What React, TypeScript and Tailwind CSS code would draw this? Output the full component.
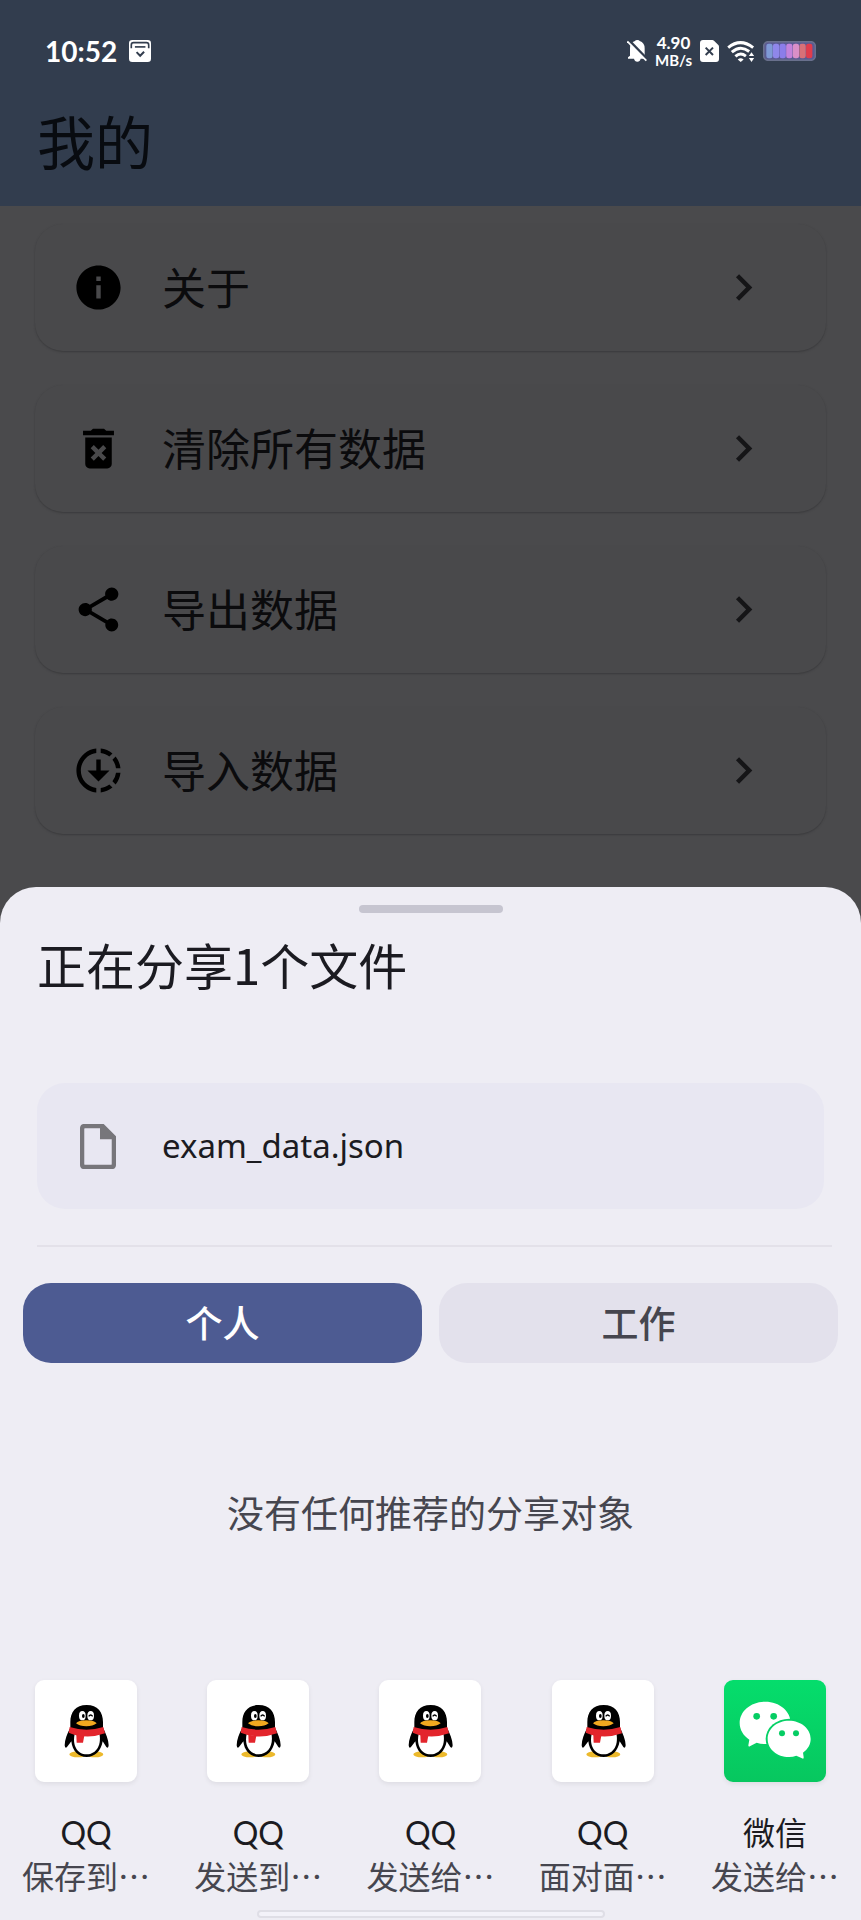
import { MdChevronRight, MdDeleteForever, MdDownloading, MdInfo, MdShare } from "react-icons/md";
import type { IconType } from "react-icons";

interface MenuItem {
    label: string;
    icon: IconType;
}

interface ShareTarget {
    app: "qq" | "wechat";
    name: string;
    action: string;
}

const menuItems: MenuItem[] = [
    { label: "关于", icon: MdInfo },
    { label: "清除所有数据", icon: MdDeleteForever },
    { label: "导出数据", icon: MdShare },
    { label: "导入数据", icon: MdDownloading },
];

const shareTargets: ShareTarget[] = [
    { app: "qq", name: "QQ", action: "保存到…" },
    { app: "qq", name: "QQ", action: "发送到…" },
    { app: "qq", name: "QQ", action: "发送给…" },
    { app: "qq", name: "QQ", action: "面对面…" },
    { app: "wechat", name: "微信", action: "发送给…" },
];

const batteryColors = ["#7f9ad6", "#8f87ea", "#8b7dea", "#c383dc", "#d98fc8", "#d87078", "#e03c4c"];

const InboxIcon = () => (
    <svg viewBox="0 0 67 67" className="size-[22px]" aria-hidden="true">
        <rect width="67" height="67" rx="10" fill="#fff" />
        <g fill="none" stroke="#323d4e" strokeWidth="5">
            <path d="M7 25V15q0-7 7-7H53q7 0 7 7V25" />
            <path d="M18 21H50" />
            <path d="M23 37l11 11 12-12" strokeWidth="6" />
        </g>
    </svg>
);

const MutedBellIcon = () => (
    <svg viewBox="0 0 60 66" className="h-[22px] w-5" aria-hidden="true">
        <path
            d="M24 3q1-3 7-3t7 3q15 5 15 22v22l5 5v4H41q-2 9-10 9t-10-9H3v-4l6-5V25Q9 8 24 3z"
            fill="#fff"
        />
        <path d="M5 0l58 60" stroke="#323d4e" strokeWidth="8" />
        <path d="M1 4l57 58" stroke="#fff" strokeWidth="5" />
    </svg>
);

const SimIcon = () => (
    <svg viewBox="0 0 57 66" className="h-[22px] w-[19px]" aria-hidden="true">
        <path d="M9 0h28q3 0 5 2l13 13q2 2 2 5v37q0 9-9 9H9q-9 0-9-9V9q0-9 9-9z" fill="#fff" />
        <path d="M17 23l22 22M39 23L17 45" stroke="#323d4e" strokeWidth="6" />
    </svg>
);

const WifiIcon = () => (
    <svg viewBox="0 0 84 64" className="h-[21px] w-7" aria-hidden="true">
        <g fill="none" stroke="#fff" strokeWidth="9">
            <path d="M3 20Q40-10 79 20" />
            <path d="M14 34Q40 11 67 32" />
            <path d="M25 47Q40 33 57 46" />
        </g>
        <path d="M32 56q9-7 18 0l-9 8z" fill="#fff" />
        <path d="M74 34l8 12H66zM74 64l8-12H66z" fill="#fff" />
    </svg>
);

const BatteryIcon = () => (
    <svg viewBox="0 0 160 60" className="h-5 w-[53px]" aria-hidden="true">
        <rect x="2" y="2" width="156" height="56" rx="14" fill="#5a5a92" stroke="#69708c" strokeWidth="5" />
        {batteryColors.map((color, index) => (
            <rect key={index} x={10 + index * 20} y="8" width="19" height="44" rx="7" fill={color} />
        ))}
    </svg>
);

const FileIcon = () => (
    <svg viewBox="0 0 108 136" className="h-[45px] w-9 shrink-0" aria-hidden="true">
        <path
            d="M12 6H68L102 40V122q0 8-8 8H14q-8 0-8-8V14q0-8 8-8z"
            fill="none"
            stroke="#77767b"
            strokeWidth="13"
        />
        <path d="M60 8H70L102 40V46H60z" fill="#77767b" />
    </svg>
);

const QQLogo = () => (
    <svg viewBox="0 0 306 306" className="size-full" aria-hidden="true">
        <ellipse cx="129" cy="223" rx="26" ry="9" fill="#ecb92c" />
        <ellipse cx="180" cy="223" rx="25" ry="9" fill="#ecb92c" />
        <path
            d="M155 75C122 75 106 96 106 126V143C97 160 89 178 89 196Q90 207 96 201L109 184C112 213 130 231 155 231S198 213 203 184L214 201Q220 207 221 196C221 178 212 160 204 143V126C204 96 188 75 155 75z"
            fill="#000"
        />
        <path d="M120 158C110 194 126 223 155 223S202 194 192 156z" fill="#fff" />
        <path d="M104 141Q155 157 205 141L210 160Q155 180 101 158z" fill="#e3252c" />
        <path d="M124 164L148 167 144 188H125z" fill="#e3252c" />
        <ellipse cx="142" cy="107" rx="10" ry="14" fill="#fff" />
        <ellipse cx="167" cy="107" rx="10" ry="14" fill="#fff" />
        <ellipse cx="145" cy="108" rx="4" ry="6" fill="#000" />
        <path d="M161 109Q167 101 173 109" fill="none" stroke="#000" strokeWidth="4" />
        <path d="M123 130Q130 121 154 121T185 130Q174 139 154 139T123 130z" fill="#f2a91f" />
    </svg>
);

const WechatLogo = () => (
    <svg viewBox="0 0 306 306" className="size-full" aria-hidden="true">
        <path
            d="M124 65C81 65 47 93 47 129C47 149 58 167 76 179L73 196Q73 202 79 198L98 188Q111 192 124 192C167 192 200 164 200 129S167 65 124 65z"
            fill="#fff"
        />
        <ellipse cx="196" cy="177" rx="71" ry="61" fill="#05d166" />
        <path
            d="M195 122C159 122 131 146 131 177S159 231 195 231Q207 231 217 227L234 235Q240 238 239 231L237 218C251 208 260 194 260 177C260 146 231 122 195 122z"
            fill="#fff"
        />
        <g fill="#05cd63">
            <circle cx="98" cy="109" r="10" />
            <circle cx="149" cy="109" r="10" />
            <circle cx="174" cy="160" r="9" />
            <circle cx="216" cy="160" r="9" />
        </g>
    </svg>
);

const StatusBar = () => {
    return (
        <div className="flex items-center justify-between px-[45px] pt-[33px] font-['Lato','Noto_Sans_CJK_SC',sans-serif] text-white">
            <div className="flex items-center gap-3">
                <span className="text-[28px] leading-9 font-bold">10:52</span>
                <InboxIcon />
            </div>
            <div className="flex items-center gap-2">
                <MutedBellIcon />
                <div className="text-center font-bold">
                    <p className="text-[17px] leading-[18px]">4.90</p>
                    <p className="text-[15px] leading-4">MB/s</p>
                </div>
                <SimIcon />
                <WifiIcon />
                <BatteryIcon />
            </div>
        </div>
    );
};

const MenuCard = ({ label, icon: Icon }: MenuItem) => {
    return (
        <button
            type="button"
            className="flex h-[127px] w-full items-center rounded-[28px] bg-[#49494b] pr-14 pl-[37px] text-left shadow-[0_1px_2px_#3a3a3c]"
        >
            <Icon className="size-[53px] shrink-0 text-black" />
            <span className="ml-[37px] flex-1 pb-1 text-[44px] leading-[56px] text-[#0b0b0d]">{label}</span>
            <MdChevronRight className="size-[53px] shrink-0 text-[#151517]" />
        </button>
    );
};

const ShareTargetItem = ({ app, name, action }: ShareTarget) => {
    return (
        <button type="button" className="flex flex-col items-center">
            <span
                className={
                    app === "qq"
                        ? "size-[102px] overflow-hidden rounded-[9px] bg-white shadow-[0_2px_5px_#00000012]"
                        : "size-[102px] overflow-hidden rounded-[9px] bg-linear-to-b from-[#05dd6c] to-[#07c75f] shadow-[0_2px_5px_#00000012]"
                }
            >
                {app === "qq" ? <QQLogo /> : <WechatLogo />}
            </span>
            <span className="mt-[31px] font-['Lato','Noto_Sans_CJK_SC',sans-serif] text-[32px] leading-10 text-[#1b1b21]">
                {name}
            </span>
            <span className="text-[32px] leading-11 whitespace-nowrap text-[#46464f]">{action}</span>
        </button>
    );
};

const ShareSheet = () => {
    return (
        <section className="rounded-t-[36px] bg-[#eeedf4] pt-[18px]">
            <div className="mx-auto h-2 w-36 rounded-full bg-[#c6c5d0]" />
            <h2 className="mt-[19px] px-[37px] text-[49px] leading-16 text-[#1b1b21]">正在分享1个文件</h2>

            <div className="mx-[37px] mt-[87px] flex h-[126px] items-center rounded-[28px] bg-[#e8e7f2] px-[43px]">
                <FileIcon />
                <span className="ml-[46px] font-['Noto_Sans',sans-serif] text-[33px] leading-11 text-[#1b1b21]">
                    exam_data.json
                </span>
            </div>
            <hr className="mt-9 mr-[29px] ml-[37px] border-t-2 border-[#e3e1e9]" />

            <div className="mt-9 grid grid-cols-2 gap-[17px] px-[23px]">
                <button type="button" className="h-20 rounded-[28px] bg-[#4d5b92] text-[37px] font-medium text-white">
                    个人
                </button>
                <button type="button" className="h-20 rounded-[28px] bg-[#e3e1ec] text-[37px] font-medium text-[#46464f]">
                    工作
                </button>
            </div>

            <p className="mt-[125px] text-center text-[37px] leading-12 text-[#46464f]">没有任何推荐的分享对象</p>

            <div className="mt-36 grid grid-cols-5">
                {shareTargets.map((target, index) => (
                    <ShareTargetItem key={index} {...target} />
                ))}
            </div>
            <div className="mx-auto mt-[13px] mb-0.5 h-2 w-[348px] rounded-full border-2 border-[#dfdee6] bg-[#f3f2f9]" />
        </section>
    );
};

const App = () => {
    return (
        <div className="flex min-h-screen flex-col bg-[#4a4a4c] font-['Noto_Sans_CJK_SC',sans-serif]">
            <header className="h-[206px] bg-[#323d4e]">
                <StatusBar />
                <h1 className="mt-[31px] px-[37px] text-[58px] leading-20 text-[#080b10]">我的</h1>
            </header>

            <main className="flex-1 px-[35px] pt-[18px] pb-[52px]">
                <ul className="flex flex-col gap-[34px]">
                    {menuItems.map((item) => (
                        <li key={item.label}>
                            <MenuCard {...item} />
                        </li>
                    ))}
                </ul>
            </main>

            <ShareSheet />
        </div>
    );
};

export default App;
